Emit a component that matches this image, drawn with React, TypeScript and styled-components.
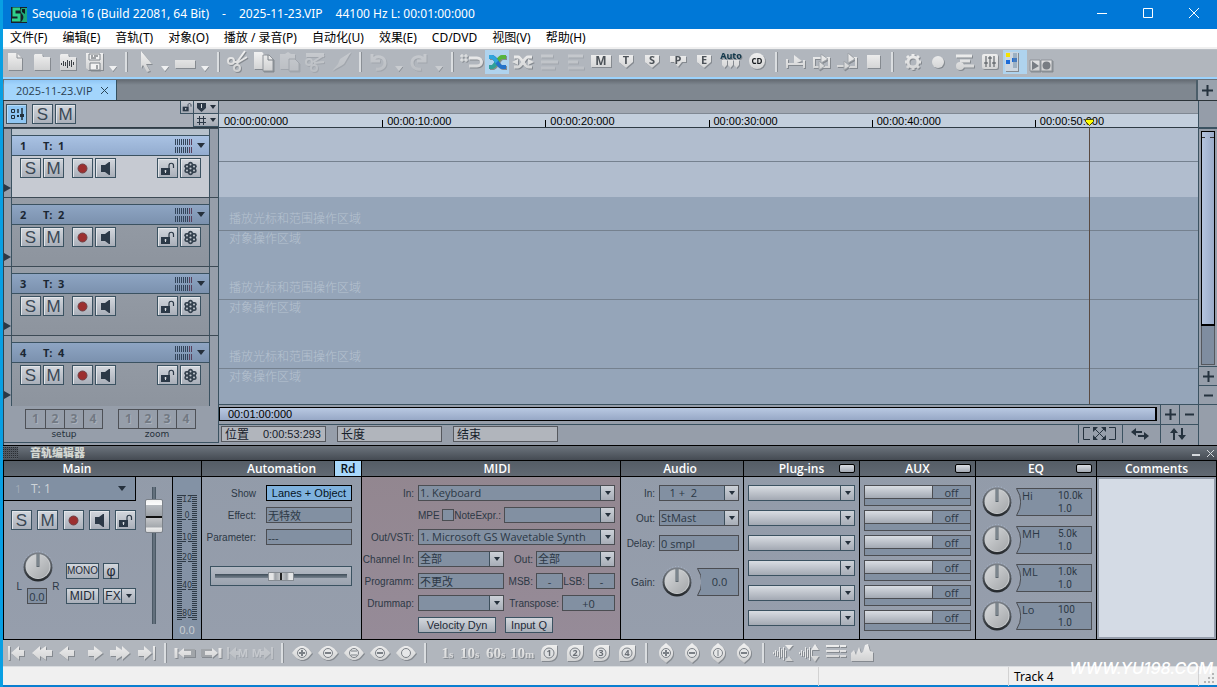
import React from "react";
import styled, { createGlobalStyle, css } from "styled-components";

const ui = `"Noto Sans", "Noto Sans CJK SC", sans-serif`;
const arial = `"Liberation Sans", "Noto Sans CJK SC", sans-serif`;
const tahoma = `"Open Sans", "Noto Sans CJK SC", sans-serif`;
const ink = "#2c3845";
const edge = "#3b5261";
const metal = "linear-gradient(#d9dde3, #a3a9b3)";

const Global = createGlobalStyle`
  * { box-sizing: border-box; }
  body { margin: 0; background: #089fe3; font-family: ${ui}; font-size: 12px; }
  button, input, select, textarea { font: inherit; color: inherit; margin: 0; padding: 0; border: 0; border-radius: 0; outline: 0; }
  svg { display: block; }
`;

const Win = styled.div`
  min-height: 100vh;
  margin-left: 3px;
  display: flex;
  flex-direction: column;
  background: #969eaa;
  border-bottom: 2px solid #0a7fd0;
`;

/* ---------- title, menu ---------- */
const TitleBar = styled.header`
  height: 29px;
  display: flex;
  align-items: center;
  background: #0078d7;
  color: #fff;
  padding-left: 8px;
`;
const TitleText = styled.h1`
  margin: 0 0 0 5px;
  padding-bottom: 2px;
  font-size: 12px;
  font-weight: 400;
  flex: 1;
  display: flex;
  gap: 13px;
  white-space: nowrap;
`;
const WinButton = styled.button`
  width: 46px;
  height: 29px;
  background: none;
  display: grid;
  place-items: center;
  padding-bottom: 3px;
`;
const MenuBar = styled.nav`
  height: 20px;
  display: flex;
  gap: 15px;
  padding-left: 7px;
  background: #fff;
  border-bottom: 2px solid #f0f0f0;
`;
const MenuItem = styled.button`
  background: none;
  color: #000;
  font-size: 12px;
  line-height: 18px;
  white-space: nowrap;
`;

/* ---------- tool bars ---------- */
const Sep = styled.span`
  width: 10px;
  height: 20px;
  display: flex;
  justify-content: center;
  &::before { content: ""; width: 2px; background: #dadde0; border-right: 1px solid #8a8f95; }
`;
const Bar = styled.div<{ $bottom?: boolean }>`
  display: flex;
  align-items: center;
  gap: 2px;
  background: #b1b6bd;
  ${(p) =>
    p.$bottom
      ? css`height: 27px; border-bottom: 1px solid #d9dcdf; padding-left: 1px; ${Sep} { width: 11px; }`
      : css`height: 30px; border-bottom: 2px solid #9bd2fc; border-top: 1px solid #b9bec4; padding-bottom: 3px;`}
`;
const Tool = styled.button<{ $on?: boolean; $off?: boolean }>`
  width: 24px;
  height: 24px;
  flex: none;
  background: ${(p) => (p.$on ? "#afd3ee" : "none")};
  svg {
    opacity: ${(p) => (p.$off ? 0.35 : 1)};
    filter: drop-shadow(1px 1px 0 #858a90);
    overflow: visible;
  }
`;
const Drop = styled.button`
  width: 12px;
  height: 24px;
  background: none;
  display: flex;
  align-items: end;
  justify-content: center;
  padding-bottom: 2px;
`;

const G = "url(#metalFill)";
const D = "#4c5258";
const T = (x: number, y: number, s: string, size = 11, fill = D, font = "Open Sans") => (
  <text x={x} y={y} fontSize={size} fontWeight="700" textAnchor="middle" fill={fill} fontFamily={font}>{s}</text>
);
const S = { fill: "none", stroke: G, strokeWidth: 2 } as const;
const folder = <path d="M6 4h7l1 3h7v13H5V5z" fill={G} />;
const shield = <path d="M4 5h14v7l-7 6-7-6z" fill={G} />;
const line = "#7b8086";
const eye = (inner: React.ReactNode) => (
  <>
    <path d="M2 12c4-5 6-7 10-7s6 2 10 7c-4 5-6 7-10 7s-6-2-10-7z" fill={G} />
    <circle cx="12" cy="12" r="4.5" fill="#e6e7e8" stroke={line} strokeWidth="1" />
    {inner}
  </>
);
const vert = (inner: React.ReactNode) => (
  <>
    <path d="M12 2c5 4 7 6 7 10s-2 6-7 10c-5-4-7-6-7-10s2-6 7-10z" fill={G} />
    <circle cx="12" cy="12" r="4.5" fill="#e6e7e8" stroke={line} strokeWidth="1" />
    {inner}
  </>
);
const plus = <path d="M9 12h6M12 9v6" stroke={line} strokeWidth="2" />;
const minus = <path d="M9 12h6" stroke={line} strokeWidth="2" />;
const ring = <path d="M9 10h6M9 14h6" stroke={line} />;
const drop = (n: string) => (
  <>
    <path d="M4 20V12C4 6 8 4 12 4h8v8c0 5-4 8-8 8z" fill={G} />
    <circle cx="12" cy="12" r="5" fill="#dfe1e3" stroke={line} />
    {T(12, 15, n, 9, "#6a6f75")}
  </>
);
const jump = (n: string, u: string, r = 16) => (
  <>
    <text x={r} y="17" fontSize="15" fontWeight="700" textAnchor="end" fill={G} fontFamily="Liberation Serif">{n}</text>
    <text x={r} y="17" fontSize="11" fontWeight="700" fill={G} fontFamily="Liberation Serif">{u}</text>
  </>
);

const icons: Record<string, React.ReactNode> = {
  new: <><path d="M5 3h9l5 5v12H5z" fill={G} /><path d="M14 3v5h5" fill="none" stroke="#8e9399" /></>,
  folder,
  wave: <>{folder}<path d="M6.500 13v2M8.500 11v5M10.500 12v4M12.500 10v8M14.500 11v5M16.500 10v7M18.500 12v3" stroke="#3b4045" /></>,
  save: <><path d="M5 3h17v17H7l-2-2z" fill={G} /><path d="M8 4h11v6H8zM9 13h10v7H9z" fill="#f3f3f3" stroke="#7f848a" /><path d="M10 6h2M13 6h4M10 8h5M16 15v4" stroke={D} strokeWidth="1" /></>,
  cursor: <path d="M8 1l11 13h-6l4 7-3 1-4-7-2 3z" fill={G} />,
  bar: <path d="M2 10h20v8H2z" fill={G} />,
  cut: <><path d="M12 12L20 1M12 13l10-6" {...S} /><circle cx="6" cy="11" r="3" {...S} /><circle cx="12" cy="18" r="3" {...S} /><path d="M9 12h5M12 15l1-4" {...S} /></>,
  copy: <><path d="M3 2h8l4 4v13H3z" fill={G} /><path d="M12 5h6l4 4v12H12z" fill={G} stroke="#8e9399" strokeWidth="1" /><path d="M17 5v5h5" fill="none" stroke="#7b8086" /></>,
  paste: <><path d="M3 4h5l3-2 3 2h4v15H3z" fill={G} /><path d="M12 9h6l4 4v8H12z" fill={G} stroke="#83888e" /></>,
  snip: <><path d="M3 3h18v4H3z" fill={G} /><path d="M10 12L21 5M11 13l10-1" {...S} /><circle cx="6" cy="12" r="3" {...S} /><circle cx="11" cy="18" r="3" {...S} /></>,
  brush: <path d="M22 2L11 9l-2 5-6 7 9-5 3-2z" fill={G} />,
  undo: <path d="M5 4v7h8M6 10c3-5 12-4 12 3 0 5-5 7-9 6" {...S} strokeWidth={3} />,
  redo: <path d="M18 4v7h-8M17 10c-3-5-12-4-12 3 0 5 5 7 9 6" {...S} strokeWidth={3} />,
  magnet: <><path d="M3 4v8M7 4v8M1 6h8M1 10h8" stroke="#eceded" strokeWidth="1" /><path d="M10 8h8c6 0 6 8 0 8h-8" {...S} strokeWidth={3} /></>,
  xfade: <><path d="M4 17h3c4 0 6-10 10-10h4" fill="none" stroke="#56b43c" strokeWidth="4" /><path d="M4 17h3c2 0 3-3 5-5" fill="none" stroke="#2f9f9b" strokeWidth="4" /><path d="M4 7h3c4 0 6 10 10 10h4" fill="none" stroke="#2472c9" strokeWidth="4" /><path d="M4 7h3c2 0 3 3 5 5" fill="none" stroke="#2fa5dc" strokeWidth="4" /></>,
  xfade2: <><path d="M3 7h4c4 0 6 10 10 10h4M3 17h4c4 0 6-10 10-10h4" {...S} strokeWidth={3} /><path d="M1 12l6-3v6zM23 12l-6-3v6z" fill={G} /></>,
  alignA: <path d="M4 6h12M4 12h17M4 18h14" {...S} strokeWidth={3} />,
  alignB: <path d="M5 6h15M5 12h10M5 18h16" {...S} strokeWidth={3} />,
  M: <><path d="M2 5h20v12H2z" fill={G} />{T(12, 15, "M", 12)}</>,
  T: <>{shield}{T(11, 14, "T")}</>,
  S: <>{shield}{T(11, 14, "S")}</>,
  P: <><path d="M3 6h16v6h-4l-4 5-4-5H3z" fill={G} />{T(11, 14, "P")}</>,
  E: <>{shield}{T(11, 14, "E")}</>,
  auto: <><path d="M3 10h5v5l-2.500 3L3 15zM9 10h5v5l-2.500 3L9 15zM15 10h5v5l-2.500 3-2.500-3z" fill={G} />{T(12, 9, "Auto", 9, "#12384b")}</>,
  cd: <><circle cx="12" cy="11" r="8" fill={G} />{T(12, 14, "CD", 8, "#15191d")}</>,
  play1: <><path d="M4 14h17M4 9v9M21 10v8" {...S} /><path d="M11 5l8 6-8 3z" fill={G} /></>,
  play2: <><path d="M5 8h15v9H5z" {...S} /><path d="M12 4l7 5-7 4zM10 11l6 5-6 4z" fill={G} stroke="#a1a6ab" strokeWidth="1" /></>,
  play3: <><path d="M14 8h7v9h-7M2 16h7" {...S} /><path d="M13 3l7 6-7 4zM9 11l6 5-6 4z" fill={G} stroke="#a1a6ab" strokeWidth="1" /></>,
  stop: <path d="M6 5h13v13H6z" fill={G} />,
  gear: <><circle cx="14" cy="12" r="5" {...S} strokeWidth={3} /><path d="M14 4v3M14 17v3M6 12h3M19 12h3M8 6l2 2M18 16l2 2M8 18l2-2M18 8l2-2" {...S} strokeWidth={3} /></>,
  rec: <circle cx="13" cy="12" r="6" fill={G} />,
  recRow: <><path d="M5 6h16M9 11h10M7 16h16" {...S} strokeWidth={3} /><circle cx="9" cy="16" r="4" fill={G} /></>,
  mixer: <><rect x="5" y="4" width="16" height="15" rx="2" fill={G} /><path d="M9 6v11M13 6v11M17 6v11M7 13h4M11 8h4M15 13h4" stroke={D} strokeWidth="1" /></>,
  manager: <><path d="M2 2h13v19H2z" fill="#ccd6e0" /><path d="M3 3h4v4H3z" fill="#f4e300" /><path d="M3 10h4v4H3zM9 8h5v4H9z" fill="#1c6bd8" /><path d="M11 3v15M13 3v15" stroke="#6d8ba6" /></>,
  transport: <><path d="M1 10h10v11H1zM12 10h11v11H12z" fill={G} stroke="#8e9399" /><path d="M3 11l7 5-7 4z" fill="#787d83" /><circle cx="17.5" cy="15.500" r="4" fill="#787d83" /></>,
  first: <><path d="M5 5v14" {...S} /><path d="M7 12l8-7v4h5v6h-5v4z" fill={G} /></>,
  rew: <path d="M2 12l8-7v4l6-4v4h6v6h-6v4l-6-4v4z" fill={G} />,
  prev: <path d="M3 12l9-7v4h6v6h-6v4z" fill={G} />,
  next: <path d="M21 12l-9-7v4H6v6h6v4z" fill={G} />,
  ffwd: <path d="M22 12l-8-7v4L8 5v4H2v6h6v4l6-4v4z" fill={G} />,
  last: <><path d="M20 5v14" {...S} /><path d="M18 12l-8-7v4H4v6h6v4z" fill={G} /></>,
  objL: <><path d="M3 7v10" {...S} strokeWidth={3} /><path d="M11 8h11v8H11z" fill="#a1a5a9" /><path d="M5 12l6-5v3h7v4h-7v3z" fill={G} /></>,
  objR: <><path d="M21 7v10" {...S} strokeWidth={3} /><path d="M2 8h11v8H2z" fill="#a1a5a9" /><path d="M19 12l-6-5v3H6v4h7v3z" fill={G} /></>,
  mL: <><path d="M3 6v12" {...S} /><path d="M4 12l7-6v4h3v4h-3v4z" fill={G} />{T(18, 16, "M", 11, "#eee")}</>,
  mR: <><path d="M21 6v12" {...S} /><path d="M20 12l-7-6v4h-3v4h3v4z" fill={G} />{T(6, 16, "M", 11, "#eee")}</>,
  hPlus: eye(plus), hMinus: eye(minus), hFit: eye(ring), hAll: eye(minus), hOne: eye(null),
  s1: jump("1", "s"), s10: jump("10", "s"), s60: jump("60", "s"), m10: jump("10", "m", 14),
  d1: drop("1"), d2: drop("2"), d3: drop("3"), d4: drop("4"),
  vPlus: vert(plus), vMinus: vert(minus), vFit: vert(<path d="M12 9v6" stroke={line} />), vAll: vert(minus),
  ampDown: <><path d="M2.500 11v2M4.500 9v6M6.500 10v5M8.500 6v11M10.500 8v8M12.500 6v13M14.500 9v7" stroke="#e6e7e8" strokeWidth="1" /><path d="M14 4h8l-4 5zM14 20h8l-4-5z" fill={G} /></>,
  ampUp: <><path d="M2.500 11v2M4.500 9v6M6.500 10v5M8.500 6v11M10.500 8v8M12.500 6v13M14.500 9v7" stroke="#e6e7e8" strokeWidth="1" /><path d="M14 9h8l-4-6zM14 15h8l-4 6z" fill={G} /></>,
  rows: <path d="M3 5h20M3 10h20M3 15h20" {...S} strokeDasharray="13 1" />,
  peaks: <path d="M2 20v-8l3-3 2 5 3-8 2 6 2-1 2-7 3-1 2 7 3 1v9z" fill={G} />,
};

const topTools = "new folder wave save v | cursor v bar v | cut copy -paste -snip -brush | -undo -v -redo -v | magnet +xfade xfade2 -alignA -alignB M T S P E auto cd | play1 play2 play3 stop | gear rec recRow mixer +manager transport".split(" ");
const bottomTools = "first rew prev next ffwd last | objL objR -mL -mR | hPlus hMinus hFit hAll hOne | s1 s10 s60 m10 d1 d2 d3 d4 | vPlus vMinus vFit vAll | ampDown ampUp rows peaks".split(" ");

const Tools = ({ items }: { items: string[] }) => (
  <>
    {items.map((raw, i) => {
      if (raw === "|") return <Sep key={i} />;
      const off = raw[0] === "-";
      const on = raw[0] === "+";
      const name = off || on ? raw.slice(1) : raw;
      if (name === "v")
        return (
          <Drop key={i} aria-label="More">
            <svg width="8" height="6"><path d="M0 0h8L4 5z" fill={off ? "#c9ccd0" : "#eff0f1"} /><path d="M4 6l4-5" stroke="#8a8f95" /></svg>
          </Drop>
        );
      return (
        <Tool key={i} $on={on} $off={off} aria-label={name}>
          <svg width="24" height="24" viewBox="0 0 24 24">{icons[name]}</svg>
        </Tool>
      );
    })}
  </>
);

/* ---------- tabs ---------- */
const TabBar = styled.div`
  height: 22px;
  display: flex;
  justify-content: space-between;
  background: linear-gradient(#656c74, #7f8790 5px);
  border-top: 1px solid #6b7178;
  border-bottom: 1px solid #2b3338;
  padding-left: 1px;
`;
const Tab = styled.div`
  width: 113px;
  display: flex;
  align-items: center;
  justify-content: space-between;
  padding: 0 7px 0 12px;
  background: linear-gradient(#8fc6f5, #a3d5fc 5px);
  border-right: 1px solid #35505f;
  color: #2a4050;
  font-family: ${tahoma};
  font-size: 11px;
  white-space: nowrap;
`;
const Flat = styled.button`
  background: none;
  display: grid;
  place-items: center;
  color: ${ink};
`;
const AddTab = styled(Flat)`
  width: 21px;
  background: #9aa2ad;
  border-left: 2px solid #4b5d69;
`;

/* ---------- workspace ---------- */
const Work = styled.main`
  flex: 1;
  display: grid;
  grid-template-columns: 215px minmax(0, 1fr) 19px;
  border-left: 1px solid #2e4350;
`;
const Side = styled.section`
  display: flex;
  flex-direction: column;
  border-right: 1px solid ${edge};
  margin-bottom: 2px;
  border-bottom: 1px solid ${edge};
  background: #969eaa;
`;
const SideHead = styled.div`
  height: 27px;
  display: flex;
  align-items: center;
  gap: 2px;
  padding-left: 2px;
  background: #a7adb7;
  border-bottom: 1px solid #2e3b45;
`;
const SideOptions = styled.div`
  margin-left: auto;
  align-self: stretch;
  display: grid;
  grid-template-columns: 13px 25px;
  grid-template-rows: 13px 13px;
  & > :last-child { grid-column: 2; }
`;
const MiniBtn = styled.button`
  background: linear-gradient(#c3c8cf, #a5abb5);
  border-left: 1px solid ${edge};
  border-bottom: 1px solid ${edge};
  display: flex;
  align-items: center;
  justify-content: center;
  gap: 4px;
`;
const Key = styled.button<{ $on?: boolean; $gap?: number }>`
  width: 21px;
  height: 20px;
  flex: none;
  display: grid;
  place-items: center;
  border: 1px solid ${edge};
  background: ${(p) => (p.$on ? "#8fc6f3" : "linear-gradient(#d3d7dd, #a9afb9)")};
  box-shadow: inset 1px 1px 0 ${(p) => (p.$on ? "#b6dcfa" : "#e3e6ea")};
  margin-left: ${(p) => p.$gap ?? 0}px;
  color: #3b4855;
  font-family: ${arial};
  font-size: 17px;
  line-height: 20px;
`;
const TrackList = styled.ol`
  flex: 1;
  display: flex;
  flex-direction: column;
  margin: 0;
  padding: 0;
  list-style: none;
`;
const TrackRow = styled.li`
  min-height: 69px;
  display: grid;
  grid-template-columns: 7px 1fr 8px;
  border-top: 1px solid #3c4a55;
  &:last-child { flex: 1; }
  & > :first-child { display: flex; padding-top: 54px; }
`;
const TrackBox = styled.div<{ $active?: boolean }>`
  display: flex;
  flex-direction: column;
  border-left: 1px solid ${edge};
  border-right: 1px solid ${edge};
  padding-top: 6px;
  background: ${(p) => (p.$active ? "linear-gradient(#b6c1cc 6px, #c6cad2 6px)" : "linear-gradient(#969da7, #8d949e)")};
`;
const TrackHead = styled.div<{ $active?: boolean }>`
  height: 21px;
  display: grid;
  grid-template-columns: 23px 15px 1fr 22px 12px;
  align-items: center;
  padding: 0 0 0 8px;
  background: ${(p) => (p.$active ? "linear-gradient(#a9c2e3, #93accf)" : "linear-gradient(#8ea5c3, #7b91ae)")};
  border-top: 1px solid ${edge};
  border-bottom: 1px solid ${edge};
  color: #1b2733;
  font-family: ${tahoma};
  font-size: 11px;
  font-weight: 700;
`;
const Keys = styled.div`
  display: flex;
  gap: 2px;
  padding: 2px 8px 0 8px;
`;
const Push = styled.span`
  margin-left: auto;
  display: flex;
  gap: 2px;
`;
const Presets = styled.div`
  height: 36px;
  display: flex;
  gap: 15px;
  padding: 3px 0 0 21px;
`;
const Preset = styled.fieldset`
  border: 0;
  margin: 0;
  padding: 0;
  display: flex;
  flex-direction: column;
  align-items: center;
  color: #25303a;
  font-family: "DejaVu Sans", sans-serif;
  font-size: 9px;
  line-height: 11px;
  & > div { display: flex; border: 1px solid #4e5157; }
`;
const PresetBtn = styled.button`
  width: 19px;
  height: 18px;
  background: none;
  color: #727983;
  font-family: ${tahoma};
  font-size: 12px;
  line-height: 18px;
  font-weight: 700;
  text-shadow: 1px 1px 0 #aab1bb;
  & + & { border-left: 1px solid #4e5157; }
`;

const Arranger = styled.section`
  display: flex;
  flex-direction: column;
  position: relative;
`;
const Ruler = styled.div`
  height: 27px;
  display: grid;
  grid-template-columns: repeat(6, 1fr);
  align-items: end;
  background: linear-gradient(#a0a7b1 12px, #7f8893 12px, #7f8893 13px, #c3cfdd 13px);
  border-bottom: 1px solid #2e3b45;
  font-family: ${arial};
  font-size: 11px;
  line-height: 13px;
  color: #000;
`;
const Tick = styled.span<{ $first?: boolean }>`
  height: 12px;
  padding-left: 5px;
  background: ${(p) => (p.$first ? "none" : "linear-gradient(#000, #000) left bottom / 1px 7px no-repeat")};
`;
const Lane = styled.div<{ $active?: boolean }>`
  height: 69px;
  background: ${(p) => (p.$active ? "#b1bdce" : "#95a5b9")};
  color: #b6c2d0;
  font-family: "Noto Sans CJK SC", sans-serif;
  font-size: 12px;
  font-weight: 300;
  & > p { margin: 0; padding-left: 10px; line-height: 14px; }
  & > p:first-child { height: 34px; padding-top: 14px; border-bottom: 1px solid #75818f; }
`;
const Playhead = styled.div`
  position: absolute;
  top: 17px;
  bottom: 41px;
  width: 9px;
  margin-left: -4px;
  background: linear-gradient(#594a42, #594a42) center bottom / 1px calc(100% - 9px) no-repeat;
`;
const HScroll = styled.div`
  height: 21px;
  display: flex;
  border-top: 1px solid ${edge};
  border-bottom: 1px solid ${edge};
`;
const HThumb = styled.div`
  flex: 1;
  height: 14px;
  margin: 2px 3px 0 0;
  padding-left: 8px;
  border: 1px solid #000;
  border-right-width: 2px;
  background: linear-gradient(#b9c9e2, #97a8c6);
  font-family: ${arial};
  font-size: 11px;
  line-height: 13px;
  color: #000;
`;
const Cell = styled(Flat)<{ $w: number }>`
  width: ${(p) => p.$w}px;
  border-left: 1px solid ${edge};
`;
const Info = styled.div`
  height: 20px;
  display: flex;
  align-items: center;
  padding: 0 0 3px 2px;
  gap: 11px;
`;
const InfoBox = styled.label`
  width: 105px;
  height: 16px;
  display: flex;
  align-items: center;
  gap: 4px;
  padding: 0 4px 0 3px;
  background: #b1b5bc;
  border: 1px solid #55585e;
  color: #16202a;
  font-size: 12px;
  white-space: nowrap;
  input {
    flex: 1;
    min-width: 0;
    background: none;
    text-align: right;
    font-family: ${arial};
    font-size: 11px;
  }
`;
const InfoCells = styled.div`
  margin-left: auto;
  display: flex;
  height: 18px;
  ${Cell} { padding: 0 3px 0 0; }
`;
const VCol = styled.aside`
  display: flex;
  flex-direction: column;
  border-left: 1px solid ${edge};
  background: #969eaa;
`;
const VHead = styled.div`
  height: 28px;
  background: #959da9;
  border-bottom: 2px solid ${edge};
`;
const VTrack = styled.div`
  flex: 1;
  margin: 2px 2px 1px;
  background: #7f8da0;
  border: 1px solid #55585e;
`;
const VThumb = styled.div`
  height: 84%;
  margin: -1px;
  padding-top: 5px;
  border: 1px solid #000;
  border-bottom-width: 2px;
  background: linear-gradient(90deg, #b4c4de, #9aabc9);
  &::before { content: ""; display: block; height: 1px; background: linear-gradient(90deg, #333 3px, transparent 3px 8px, #333 8px); }
`;
const VBtn = styled(Flat)`
  height: 19px;
  border-top: 1px solid ${edge};
`;
const VFoot = styled.div`
  height: 41px;
  border-top: 1px solid ${edge};
`;

/* ---------- track editor ---------- */
const DockTitle = styled.div`
  height: 16px;
  display: flex;
  align-items: center;
  border: solid #000;
  border-width: 1px 0;
  background: linear-gradient(#6c747d, #454b53);
`;
const Grip = styled.span`
  width: 15px;
  height: 12px;
  background: repeating-linear-gradient(90deg, transparent 0 1px, #50565e 1px 2px), repeating-linear-gradient(#2a2e33 0 1px, #565d65 1px 2px);
`;
const DockName = styled.h2`
  margin: 0 auto 0 12px;
  font-size: 11px;
  line-height: 14px;
  font-weight: 900;
  color: #d3d7d2;
`;
const DockBtn = styled(Flat)`
  width: 14px;
  height: 12px;
  color: #d5d9dd;
`;
const Dock = styled.div`
  display: grid;
  grid-template-columns: 198px 160px 259px 123px 116px 116px 121px minmax(100px, 1fr);
  border-bottom: 1px solid #000;
  border-left: 1px solid #000;
`;
const Panel = styled.section<{ $tint?: boolean }>`
  display: flex;
  flex-direction: column;
  min-height: 178px;
  border-right: 1px solid #000;
  background: ${(p) => (p.$tint ? "linear-gradient(#92868f, #968b98)" : "linear-gradient(#929ba9, #969eac)")};
  color: ${ink};
  font-family: ${arial};
  font-size: 10px;
`;
const PanelHead = styled.header<{ $left?: number; $right?: number }>`
  height: 16px;
  display: grid;
  grid-template-columns: 1fr auto 1fr;
  align-items: center;
  padding: 0 ${(p) => p.$right ?? 0}px 0 ${(p) => p.$left ?? 0}px;
  background: linear-gradient(#555d66, #616973);
  border-bottom: 1px solid #000;
  color: #fff;
  h3 { grid-column: 2; margin: 0; font: 600 12px/15px ${tahoma}; }
  & > button { justify-self: end; }
`;
const Lamp = styled.button`
  width: 16px;
  height: 9px;
  margin-right: 4px;
  border: 1px solid #000;
  border-radius: 2px;
  background: ${metal};
`;
const Rd = styled.button`
  width: 27px;
  height: 15px;
  background: #a8d8fb;
  border-left: 1px solid #000;
  color: #0a141c;
  font: 600 12px/15px ${tahoma};
`;
const MainBody = styled.div`
  flex: 1;
  display: grid;
  grid-template-columns: 1fr 36px 29px;
`;
const MainLeft = styled.div`
  display: flex;
  flex-direction: column;
`;
const TrackPick = styled.button`
  width: 132px;
  height: 24px;
  display: grid;
  grid-template-columns: 16px 1fr 10px;
  align-items: center;
  padding: 0 7px 0 11px;
  background: #8190a3;
  border: solid #000;
  border-width: 0 1px 1px 0;
  text-align: left;
  color: #cfd4d8;
  font-family: ${tahoma};
  font-size: 12px;
  & > :first-child { color: #a2abb6; font-size: 11px; }
`;
const MainKeys = styled.div`
  display: flex;
  gap: 5px;
  padding: 9px 0 0 7px;
`;
const MainGrid = styled.div`
  display: flex;
  gap: 8px;
  padding: 21px 0 0 14px;
`;
const PanBox = styled.div`
  display: flex;
  flex-direction: column;
  align-items: center;
  width: 40px;
`;
const PanVal = styled.div`
  display: flex;
  gap: 5px;
  line-height: 8px;
  font-size: 10px;
  input { margin-top: 5px; }
`;
const Switches = styled.div`
  display: grid;
  grid-template-columns: 33px 33px;
  column-gap: 4px;
  row-gap: 9px;
  padding-top: 12px;
  align-content: start;
`;
const Btn = styled.button<{ $w?: number; $hot?: boolean; $size?: number }>`
  height: 16px;
  width: ${(p) => (p.$w ? p.$w + "px" : "auto")};
  display: flex;
  align-items: center;
  justify-content: center;
  border: 1px solid ${(p) => (p.$hot ? "#000" : edge)};
  background: ${(p) => (p.$hot ? "#7fb2de" : "linear-gradient(#d3d7dd, #a9afb9)")};
  color: ${(p) => (p.$hot ? "#06121c" : "#1f2b38")};
  font-family: ${arial};
  font-size: ${(p) => p.$size ?? 11}px;
  line-height: 14px;
  white-space: nowrap;
`;
const FxBtn = styled.button`
  width: 18px;
  background: none;
  color: #1f2b38;
  font-family: ${arial};
  font-size: 12px;
  line-height: 15px;
  text-align: center;
`;
const FaderCol = styled.div`
  display: flex;
  justify-content: center;
  padding-top: 10px;
`;
const Fader = styled.input`
  appearance: none;
  writing-mode: vertical-lr;
  direction: rtl;
  width: 18px;
  height: 137px;
  background: linear-gradient(90deg, #3f4d59, #6f7c89 2px, #3f4d59) center / 4px 100% no-repeat;
  &::-webkit-slider-thumb {
    appearance: none;
    width: 18px;
    height: 34px;
    border: 1px solid #7c828a;
    border-radius: 2px;
    background: linear-gradient(#f1f1f1, #fdfdfd 5px, #b8bcc1 5px, #9a9fa5 16px, #111 16px, #111 18px, #c4c6c9 18px, #a4a8ad 27px, #ececec 28px, #d5d6d8);
  }
`;
const MeterCol = styled.div`
  background: #8392a5;
  border-left: 1px solid #000;
  display: flex;
  flex-direction: column;
  align-items: center;
  padding-top: 18px;
  gap: 3px;
  color: #c9ced3;
  font-family: ${tahoma};
  font-size: 11px;
  line-height: 12px;
`;
const Form = styled.div<{ $gap?: number; $pad?: string }>`
  display: flex;
  flex-direction: column;
  gap: ${(p) => p.$gap ?? 6}px;
  padding: ${(p) => p.$pad ?? "8px 4px 0 0"};
`;
const Row = styled.div<{ $label?: number; $space?: number; $top?: number }>`
  display: flex;
  align-items: center;
  min-height: 16px;
  padding-top: ${(p) => p.$top ?? 0}px;
  white-space: nowrap;
  & > :first-child {
    width: ${(p) => p.$label ?? 52}px;
    text-align: right;
    flex: none;
    margin-right: ${(p) => p.$space ?? 4}px;
  }
`;
const Gap = styled.span<{ $w: number }>`
  width: ${(p) => p.$w}px;
  padding-right: 3px;
  text-align: right;
  flex: none;
`;
const field = css`
  height: 16px;
  border: 1px solid #4b4d52;
  background: #8290a2;
  color: ${ink};
  font-family: ${tahoma};
  font-size: 11px;
  line-height: 14px;
`;
const Text = styled.input<{ $w?: number; $align?: string }>`
  ${field}
  width: ${(p) => (p.$w ? p.$w + "px" : "100%")};
  min-width: 0;
  padding: 0 1px;
  text-align: ${(p) => p.$align ?? "left"};
`;
const Combo = styled.span<{ $w?: number; $light?: boolean }>`
  ${field}
  position: relative;
  display: flex;
  width: ${(p) => (p.$w ? p.$w + "px" : "100%")};
  min-width: 0;
  ${(p) => p.$light && css`background: ${metal}; border-color: ${edge};`}
  select { appearance: none; width: 100%; height: 14px; padding: 0 14px 0 1px; background: none; line-height: 14px; }
`;
const Arrow = styled.i`
  position: absolute;
  right: 0;
  top: 0;
  width: 14px;
  height: 14px;
  pointer-events: none;
  display: grid;
  place-items: center;
  border-left: 1px solid #3d4f5c;
  background: linear-gradient(#ccd1d8, #a7adb7);
`;
const Check = styled.input`
  appearance: none;
  width: 12px;
  height: 12px;
  border: 1px solid #4b4d52;
  background: #8290a2;
`;
const HFaderBox = styled.div`
  height: 20px;
  margin: 15px 0 0 4px;
  display: flex;
  align-items: center;
  justify-content: center;
  padding: 0 4px;
  border: 1px solid ${edge};
  background: linear-gradient(#b4bac4, #9aa2ae);
`;
const HFader = styled.input`
  appearance: none;
  width: 100%;
  height: 10px;
  background: linear-gradient(#3f4d59, #77838f) center / 100% 4px no-repeat;
  &::-webkit-slider-thumb {
    appearance: none;
    width: 26px;
    height: 9px;
    border: 1px solid #858b92;
    background: linear-gradient(90deg, #e4e5e6 4px, #9ba0a6 6px, #c3c6c9 11px, #222 11px, #222 13px, #c3c6c9 13px, #9ba0a6 18px, #e4e5e6 20px);
  }
`;
const KnobWrap = styled.span`
  position: relative;
  flex: none;
  width: 30px;
  height: 32px;
  input { position: absolute; inset: 0; width: 100%; height: 100%; opacity: 0; }
`;
const Readout = styled.span<{ $w: number }>`
  display: flex;
  width: ${(p) => p.$w}px;
  height: 28px;
  flex: none;
`;
const ReadoutBody = styled.span`
  flex: 1;
  display: grid;
  grid-template-columns: 37px 1fr;
  background: #8290a2;
  border: solid #4b4d52;
  border-width: 1px 1px 1px 0;
  font-family: ${tahoma};
  font-size: 11px;
  line-height: 14px;
  & > span { padding-left: 1px; }
  input { grid-column: 1 / 3; width: 100%; min-width: 0; background: none; text-align: center; }
  small { font: 10px/13px Roboto, sans-serif; display: flex; flex-direction: column; }
`;
const Aux = styled.div`
  height: 21px;
  display: grid;
  grid-template-columns: 67px 1fr;
  grid-template-rows: 12px 6px;
  row-gap: 1px;
  border: 1px solid #4b4d52;
  background: linear-gradient(#4b4d52, #4b4d52) 0 12px / 100% 1px no-repeat, #8290a2;
  output {
    border-left: 1px solid #4b4d52;
    text-align: center;
    font-family: ${tahoma};
    font-size: 11px;
    line-height: 13px;
  }
`;
const AuxRange = styled.input`
  appearance: none;
  width: 100%;
  height: 12px;
  background: ${metal};
  &::-webkit-slider-thumb { appearance: none; width: 0; height: 0; }
`;
const EqRow = styled.div`
  height: 38px;
  display: flex;
  align-items: center;
  gap: 4px;
`;
const Notes = styled.textarea`
  flex: 1;
  margin: 2px;
  background: #d4dbe5;
  resize: none;
  font-size: 11px;
`;

/* ---------- status ---------- */
const Status = styled.footer`
  position: relative;
  height: 18px;
  display: grid;
  grid-template-columns: 1fr 190px 190px 19px;
  background: #f0f0f0;
  color: #000;
  font-size: 12px;
  line-height: 19px;
  & > span + span { border-left: 1px solid #d2d2d2; padding-left: 5px; }
`;
const Mark = styled.strong`
  position: absolute;
  right: 4px;
  bottom: 7px;
  color: #fff;
  font: italic 500 16px/20px Inter, sans-serif;
  white-space: nowrap;
`;

const Tri = ({ w = 8 }: { w?: number }) => (
  <svg width={w} height={w / 2 + 1}><path d={`M0 0h${w}L${w / 2} ${w / 2 + 1}z`} fill="#25303c" /></svg>
);
const RecIcon = () => <svg width="11" height="11"><circle cx="5.5" cy="5.5" r="4.5" fill="#9c2f2f" stroke="#6f4146" /></svg>;
const Speaker = () => <svg width="11" height="13"><path d="M1 3h4l4-3h1v13H9L5 10H1z" fill="#2c3947" /></svg>;
const Lock = ({ s = 15 }: { s?: number }) => (
  <svg width={s} height={s} viewBox="0 0 15 15"><path d="M1 7h9v7H1z" fill="#2c3947" /><path d="M9 7V4.500c0-3 4.500-3 4.500 0V7" fill="none" stroke="#2c3947" strokeWidth="1.2" /><path d="M5.500 9v3M4.500 10h2" stroke="#d6dade" /></svg>
);
const Reel = () => (
  <svg width="15" height="15" viewBox="0 0 15 15"><g fill="#34414e"><circle cx="7.5" cy="7.5" r="5.5" /><circle cx="7.5" cy="3" r="2.300" /><circle cx="11.4" cy="5.200" r="2.300" /><circle cx="11.4" cy="9.800" r="2.300" /><circle cx="7.5" cy="12" r="2.300" /><circle cx="3.600" cy="9.800" r="2.300" /><circle cx="3.600" cy="5.200" r="2.300" /></g><g fill="#c3c8cf"><circle cx="7.5" cy="3.500" r="1" /><circle cx="11" cy="5.500" r="1" /><circle cx="11" cy="9.500" r="1" /><circle cx="7.5" cy="11.500" r="1" /><circle cx="4" cy="9.500" r="1" /><circle cx="4" cy="5.500" r="1" /><circle cx="7.5" cy="7.5" r="1.1" /></g></svg>
);
const Plus = () => <svg width="11" height="11"><path d="M0 5.5h11M5.5 0v11" stroke="#25323e" strokeWidth="2" /></svg>;
const Minus = () => <svg width="9" height="3"><path d="M0 1.5h9" stroke="#25323e" strokeWidth="2" /></svg>;
const Bars = () => (
  <svg width="18" height="14"><path d="M0.5 0v6M2.5 0v6M4.5 0v6M6.5 0v6M8.5 0v6M10.5 0v6M12.5 0v6M0.5 8v6M2.5 8v6M4.5 8v6M6.5 8v6M8.5 8v6M10.5 8v6M12.5 8v6" stroke="#32445a" /><path d="M14.5 0v6M16.5 0v6M14.5 8v6M16.5 8v6" stroke="#59405c" /></svg>
);
const Knob = ({ name }: { name: string }) => (
  <KnobWrap>
    <svg width="30" height="32">
      <circle cx="15" cy="15" r="14.500" fill="none" stroke="#a9b7cc" strokeDasharray="1 2" />
      <circle cx="15" cy="16" r="14.500" fill="url(#knobRim)" />
      <circle cx="15" cy="15.500" r="12.500" fill="#c9ccce" />
      <circle cx="15" cy="15.500" r="11.500" fill="url(#knobFace)" />
      <path d="M15 3v13" stroke="#5c666e" strokeWidth="3" /><path d="M15 3v12" stroke="#9aa4ac" />
    </svg>
    <input type="range" aria-label={name} defaultValue={50} />
  </KnobWrap>
);
const Curve = () => (
  <svg width="5" height="28"><path d="M0 0h5v28H0Q9 14 0 0z" fill="#8290a2" /><path d="M5 .5H0.5Q9 14 .5 27.5H5" fill="none" stroke="#4b4d52" /></svg>
);
const Select = ({ label, value, w, light }: { label: string; value: string; w?: number; light?: boolean }) => (
  <Combo $w={w} $light={light}>
    <select aria-label={label}><option>{value}</option></select>
    <Arrow><Tri w={6} /></Arrow>
  </Combo>
);
const meterMarks: [number, string][] = [[0, "12"], [24, "0"], [46, "10"], [66, "20"], [94, "40"], [122, "80"]];
const meterLabels = [7, 23, 45, 65, 93, 121];
const Meter = () => (
  <svg width="20" height="126">
    <path d={Array.from({ length: 63 }, (_, i) => `M0 ${i * 2 + 0.5}h5M15 ${i * 2 + 0.5}h5`).join("")} stroke="#2e3a46" />
    <path d={meterMarks.map(([y]) => `M0 ${y + 0.5}h9M11 ${y + 0.5}h9`).join("")} stroke="#2e3a46" />
    {meterMarks.map(([, t], i) => (
      <text key={t} x="10" y={meterLabels[i]} fontSize="8" textAnchor="middle" fill="#2e3a46" fontFamily="DejaVu Sans">{t}</text>
    ))}
  </svg>
);

export default function App() {
  return (
    <Win>
      <Global />
      <svg width="0" height="0" aria-hidden="true">
        <defs>
          <linearGradient id="metalFill" gradientUnits="userSpaceOnUse" x1="0" y1="3" x2="0" y2="21"><stop offset="0" stopColor="#f0f0f0" /><stop offset="1" stopColor="#cfd0d1" /></linearGradient>
          <linearGradient id="knobRim" x1="0" y1="0" x2="0" y2="1"><stop offset="0" stopColor="#7b8189" /><stop offset="1" stopColor="#23272b" /></linearGradient>
          <linearGradient id="knobFace" x1="0" y1="0" x2="1" y2="1"><stop offset="0" stopColor="#d7d9db" /><stop offset="1" stopColor="#a3a6a9" /></linearGradient>
        </defs>
      </svg>

      <TitleBar>
        <svg width="16" height="16"><path d="M0 0h16v16H0z" fill="#17202a" /><path d="M9 2H3v6h5v5H1" fill="none" stroke="#2fd08a" strokeWidth="3" /><path d="M11 1c-2 0-2 4 0 6s2 5-1 8h6V1z" fill="#1fa879" /><path d="M11 2v3l3 2V2z" fill="#0d1a1c" /></svg>
        <TitleText><span>Sequoia 16 (Build 22081, 64 Bit)</span><span>-</span><span>2025-11-23.VIP</span><span>44100 Hz L: 00:01:00:000</span></TitleText>
        <WinButton aria-label="Minimize"><svg width="10" height="10"><path d="M0 5.5h10" stroke="#fff" /></svg></WinButton>
        <WinButton aria-label="Maximize"><svg width="10" height="10"><path d="M.5 .5h9v9h-9z" fill="none" stroke="#fff" /></svg></WinButton>
        <WinButton aria-label="Close"><svg width="10" height="10"><path d="M0 0l10 10M10 0L0 10" stroke="#fff" /></svg></WinButton>
      </TitleBar>
      <MenuBar>
        {["文件(F)", "编辑(E)", "音轨(T)", "对象(O)", "播放 / 录音(P)", "自动化(U)", "效果(E)", "CD/DVD", "视图(V)", "帮助(H)"].map((m) => (
          <MenuItem key={m}>{m}</MenuItem>
        ))}
      </MenuBar>
      <Bar role="toolbar"><Tools items={topTools} /></Bar>

      <TabBar>
        <Tab>2025-11-23.VIP<Flat aria-label="Close tab"><svg width="9" height="9"><path d="M1 1l7 7M8 1L1 8" stroke="#2a4658" /></svg></Flat></Tab>
        <AddTab aria-label="Add project"><Plus /></AddTab>
      </TabBar>

      <Work>
        <Side>
          <SideHead>
            <Key $on aria-label="Track groups"><svg width="14" height="14"><path d="M1.500 2.500h3v3h-3zM1.500 8.500h3v3h-3z" fill="none" stroke="#22303c" /><path d="M8 2v4M12 1v6M12 7v6M8 8v1" stroke="#22303c" strokeWidth="1.500" /><path d="M10 7h4v3h-4zM7 8h2v2H7z" fill="#22303c" /></svg></Key>
            <Key $gap={3}>S</Key>
            <Key>M</Key>
            <SideOptions>
              <MiniBtn aria-label="Lock"><Lock s={10} /></MiniBtn>
              <MiniBtn aria-label="Marker"><svg width="9" height="9"><path d="M0 0h9v5L4.500 9 0 5z" fill="#2c3947" /><path d="M4.500 1v4" stroke="#d6dade" /></svg><Tri w={6} /></MiniBtn>
              <MiniBtn aria-label="Grid"><svg width="9" height="9"><path d="M2.500 0v9M6.500 0v9M0 2.500h9M0 6.500h9" stroke="#2c3947" /></svg><Tri w={6} /></MiniBtn>
            </SideOptions>
          </SideHead>
          <TrackList>
            {[1, 2, 3, 4].map((n) => (
              <TrackRow key={n}>
                <span><svg width="7" height="10"><path d="M0 1l7 4-7 4z" fill="#2c3947" /></svg></span>
                <TrackBox $active={n === 1}>
                  <TrackHead $active={n === 1}>
                    <span>{n}</span><span>T:</span><span>{n}</span><Bars /><Tri w={8} />
                  </TrackHead>
                  <Keys>
                    <Key>S</Key><Key>M</Key>
                    <Key $gap={6} aria-label="Record"><RecIcon /></Key>
                    <Key aria-label="Monitor"><Speaker /></Key>
                    <Push>
                      <Key aria-label="Lock track"><Lock /></Key>
                      <Key aria-label="Freeze"><Reel /></Key>
                    </Push>
                  </Keys>
                </TrackBox>
                <span />
              </TrackRow>
            ))}
          </TrackList>
          <Presets>
            {["setup", "zoom"].map((k) => (
              <Preset key={k} aria-label={k}>
                <div>{[1, 2, 3, 4].map((n) => <PresetBtn key={n}>{n}</PresetBtn>)}</div>
                <span>{k}</span>
              </Preset>
            ))}
          </Presets>
        </Side>

        <Arranger>
          <Ruler>
            {[0, 10, 20, 30, 40, 50].map((s) => (
              <Tick key={s} $first={s === 0}>{`00:00:${s === 0 ? "00" : s}:000`}</Tick>
            ))}
          </Ruler>
          {[1, 2, 3, 4].map((n) => (
            <Lane key={n} $active={n === 1}>
              <p>{n > 1 && "播放光标和范围操作区域"}</p>
              <p>{n > 1 && "对象操作区域"}</p>
            </Lane>
          ))}
          <Playhead style={{ left: `${(53.293 / 60) * 100}%` }}>
            <svg width="9" height="8"><path d="M.5 1.500h8v2l-4 4-4-4z" fill="#ffff00" stroke="#4a4a00" /></svg>
          </Playhead>
          <HScroll>
            <HThumb>00:01:00:000</HThumb>
            <Cell $w={19} aria-label="Zoom in horizontally"><Plus /></Cell>
            <Cell $w={19} aria-label="Zoom out horizontally"><Minus /></Cell>
          </HScroll>
          <Info>
            <InfoBox>位置<input defaultValue="0:00:53:293" /></InfoBox>
            <InfoBox>长度<input /></InfoBox>
            <InfoBox>结束<input /></InfoBox>
            <InfoCells>
              <Cell $w={44} aria-label="Fit view"><svg width="33" height="13"><path d="M7 .5H.5v12H7M26 .5h6.500v12H26" fill="none" stroke="#25323e" /><path d="M11 1l11 11M22 1L11 12" stroke="#25323e" /><path d="M10 0h5l-5 5zM23 0v5l-5-5zM10 13V8l5 5zM23 13h-5l5-5z" fill="#25323e" /></svg></Cell>
              <Cell $w={38} aria-label="Swap horizontally"><svg width="18" height="12"><path d="M0 4l5-4v3h6v2H5v3zM18 8l-5 4V9H7V7h6V4z" fill="#25323e" /></svg></Cell>
              <Cell $w={38} aria-label="Swap vertically"><svg width="16" height="12"><path d="M4 0l4 5H5v7H3V5H0zM12 12l-4-5h3V0h2v7h3z" fill="#25323e" /></svg></Cell>
            </InfoCells>
          </Info>
        </Arranger>

        <VCol>
          <VHead />
          <VTrack><VThumb /></VTrack>
          <VBtn aria-label="Zoom in vertically"><Plus /></VBtn>
          <VBtn aria-label="Zoom out vertically"><Minus /></VBtn>
          <VFoot />
        </VCol>
      </Work>

      <DockTitle>
        <Grip />
        <DockName>音轨编辑器</DockName>
        <DockBtn aria-label="Minimize editor"><svg width="8" height="8"><path d="M0 6h8" stroke="currentColor" strokeWidth="2" /></svg></DockBtn>
        <DockBtn aria-label="Close editor"><svg width="7" height="7"><path d="M0 0l7 7M7 0L0 7" stroke="currentColor" /></svg></DockBtn>
      </DockTitle>
      <Dock>
        <Panel>
          <PanelHead $right={51}><h3>Main</h3></PanelHead>
          <MainBody>
            <MainLeft>
              <TrackPick><span>1</span><span>T: 1</span><Tri w={8} /></TrackPick>
              <MainKeys>
                <Key>S</Key><Key>M</Key>
                <Key aria-label="Record"><RecIcon /></Key>
                <Key aria-label="Monitor"><Speaker /></Key>
                <Key aria-label="Lock"><Lock /></Key>
              </MainKeys>
              <MainGrid>
                <PanBox>
                  <Knob name="Pan" />
                  <PanVal><span>L</span><Text $w={20} aria-label="Pan value" defaultValue="0.0" /><span>R</span></PanVal>
                </PanBox>
                <Switches>
                  <Btn $size={10}>MONO</Btn>
                  <Btn $w={16} $size={14}>φ</Btn>
                  <Btn $size={12}>MIDI</Btn>
                  <Combo $light><FxBtn>FX</FxBtn><Arrow><Tri w={6} /></Arrow></Combo>
                </Switches>
              </MainGrid>
            </MainLeft>
            <FaderCol><Fader type="range" aria-label="Volume" defaultValue={88} /></FaderCol>
            <MeterCol><Meter />0.0</MeterCol>
          </MainBody>
        </Panel>

        <Panel>
          <PanelHead><h3>Automation</h3><Rd>Rd</Rd></PanelHead>
          <Form $pad="8px 9px 0 4px">
            <Row $label={50} $space={10}><span>Show</span><Btn $w={86} $hot>Lanes + Object</Btn></Row>
            <Row $label={50} $space={10}><label htmlFor="fx">Effect:</label><Text id="fx" $w={86} defaultValue="无特效" /></Row>
            <Row $label={50} $space={10}><label htmlFor="par">Parameter:</label><Text id="par" $w={86} defaultValue="---" /></Row>
            <HFaderBox><HFader type="range" aria-label="Automation value" defaultValue={50} /></HFaderBox>
          </Form>
        </Panel>

        <Panel $tint>
          <PanelHead $left={12}><h3>MIDI</h3></PanelHead>
          <Form>
            <Row><span>In:</span><Select label="MIDI in" value="1. Keyboard" w={197} /></Row>
            <Row>
              <span /><Gap $w={24}>MPE</Gap><Check type="checkbox" aria-label="MPE" />
              <Gap $w={50}>NoteExpr.:</Gap><Select label="Note expression" value="" w={111} />
            </Row>
            <Row><span>Out/VSTi:</span><Select label="MIDI out" value="1. Microsoft GS Wavetable Synth" w={197} /></Row>
            <Row><span>Channel In:</span><Select label="Channel in" value="全部" w={86} /><Gap $w={32}>Out:</Gap><Select label="Channel out" value="全部" w={79} /></Row>
            <Row>
              <label htmlFor="prog">Programm:</label><Text id="prog" $w={86} defaultValue="不更改" /><Gap $w={32}>MSB:</Gap>
              <Text $w={27} $align="center" aria-label="MSB" defaultValue="-" /><Gap $w={25}>LSB:</Gap><Text $w={27} $align="center" aria-label="LSB" defaultValue="-" />
            </Row>
            <Row><span>Drummap:</span><Select label="Drum map" value="" w={86} /><Gap $w={58}>Transpose:</Gap><Text $w={53} $align="center" aria-label="Transpose" defaultValue="+0" /></Row>
            <Row><span /><Btn $w={78}>Velocity Dyn</Btn><Gap $w={9} /><Btn $w={48}>Input Q</Btn></Row>
          </Form>
        </Panel>

        <Panel>
          <PanelHead $right={4}><h3>Audio</h3></PanelHead>
          <Form $gap={9} $pad="8px 3px 0 0">
            <Row $label={34}><span>In:</span><Select label="Audio in" value={"\u00a0\u00a0\u00a01 +\u00a0\u00a02"} w={80} /></Row>
            <Row $label={34}><span>Out:</span><Select label="Audio out" value="StMast" w={80} /></Row>
            <Row $label={34}><label htmlFor="delay">Delay:</label><Text id="delay" $w={80} defaultValue="0 smpl" /></Row>
            <Row $label={34} $top={6}>
              <span>Gain:</span><Gap $w={3} /><Knob name="Gain" /><Gap $w={5} />
              <Readout $w={42}><Curve /><ReadoutBody><input aria-label="Gain value" defaultValue="0.0" /></ReadoutBody></Readout>
            </Row>
          </Form>
        </Panel>

        <Panel>
          <PanelHead><h3>Plug-ins</h3><Lamp aria-label="Plug-ins on" /></PanelHead>
          <Form $gap={9} $pad="8px 4px 0 4px">
            {[1, 2, 3, 4, 5, 6].map((n) => <Select key={n} label={`Plug-in ${n}`} value="" light />)}
          </Form>
        </Panel>

        <Panel>
          <PanelHead><h3>AUX</h3><Lamp aria-label="AUX on" /></PanelHead>
          <Form $gap={4} $pad="8px 4px 0 4px">
            {[1, 2, 3, 4, 5, 6].map((n) => (
              <Aux key={n}><AuxRange type="range" aria-label={`Send ${n}`} defaultValue={0} /><output>off</output></Aux>
            ))}
          </Form>
        </Panel>

        <Panel>
          <PanelHead><h3>EQ</h3><Lamp aria-label="EQ on" /></PanelHead>
          <Form $gap={0} $pad="6px 4px 0 6px">
            {[["Hi", "10.0k"], ["MH", "5.0k"], ["ML", "1.0k"], ["Lo", "100"]].map(([b, f]) => (
              <EqRow key={b}>
                <Knob name={`${b} gain`} />
                <Readout $w={76}><Curve /><ReadoutBody><span>{b}</span><small><span>{f}</span><span>1.0</span></small></ReadoutBody></Readout>
              </EqRow>
            ))}
          </Form>
        </Panel>

        <Panel>
          <PanelHead><h3>Comments</h3></PanelHead>
          <Notes aria-label="Comments" />
        </Panel>
      </Dock>

      <Bar $bottom role="toolbar"><Tools items={bottomTools} /></Bar>
      <Status>
        <span /><span /><span>Track 4</span>
        <span><svg width="11" height="16"><path d="M8 6h2v2H8zM8 10h2v2H8zM4 10h2v2H4zM8 14h2v2H8zM4 14h2v2H4zM0 14h2v2H0z" fill="#b5b5b5" /></svg></span>
        <Mark>WWW.YU198.COM</Mark>
      </Status>
    </Win>
  );
}
